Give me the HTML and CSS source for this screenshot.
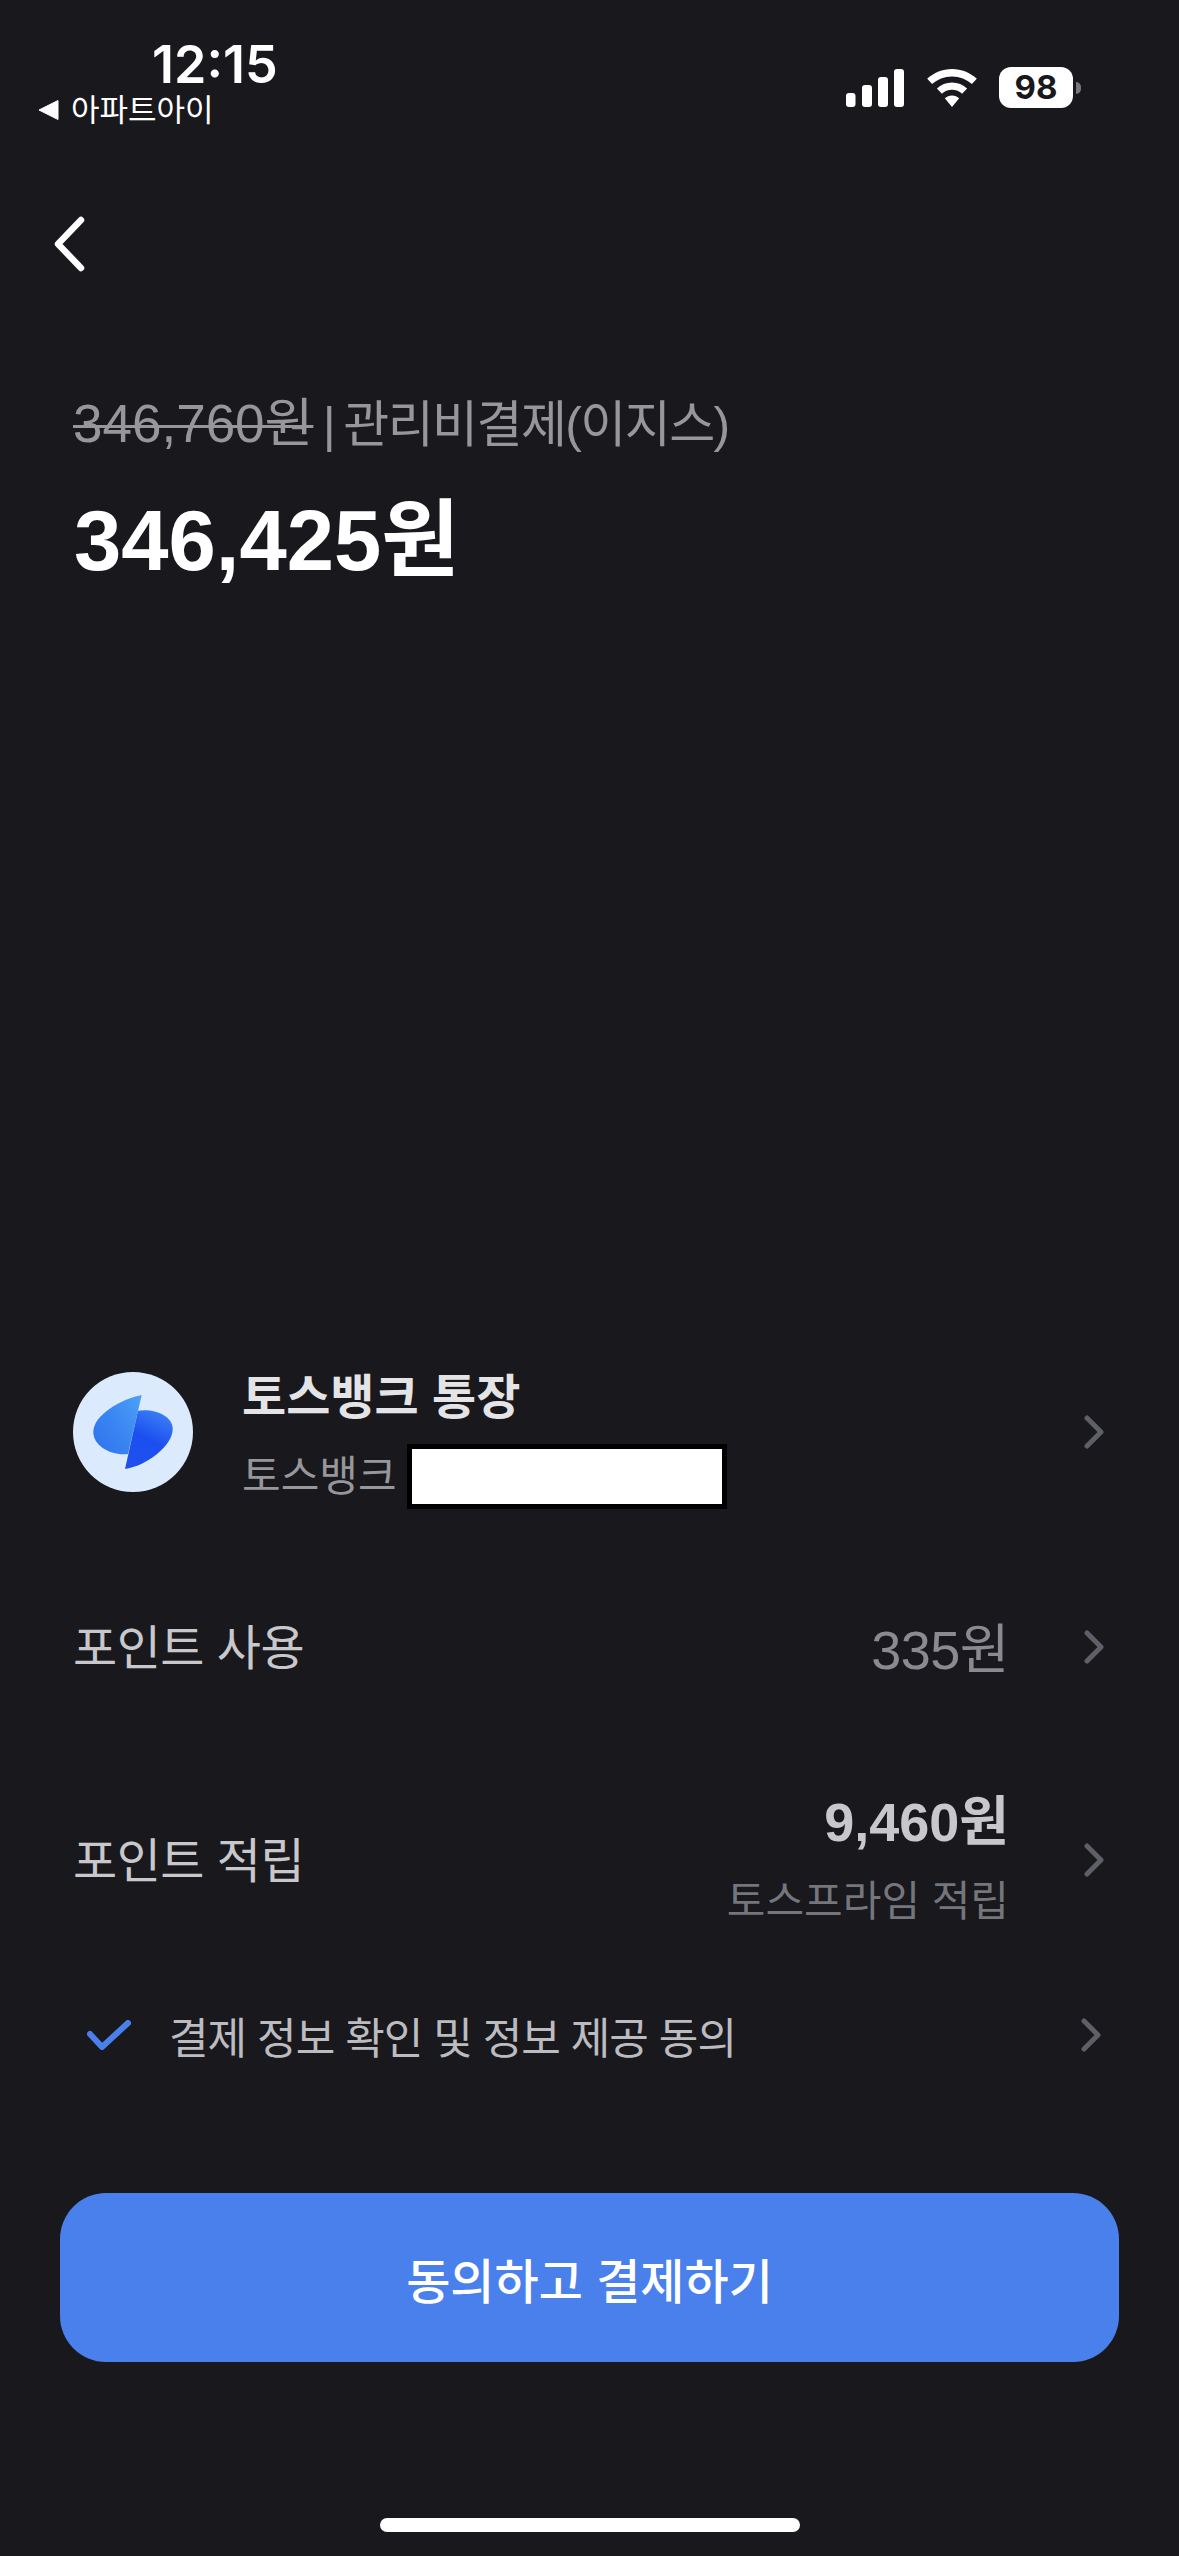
FILE: index.html
```html
<!DOCTYPE html>
<html lang="ko">
<head>
    <meta charset="UTF-8">
    <meta name="viewport" content="width=device-width, initial-scale=1.0">
    <title>결제</title>
    <link rel="stylesheet" href="styles.css">
</head>
<body>
    <div class="page">
        <!-- Status bar -->
        <div class="status">
            <div class="status-left">
                <div class="time">12:15</div>
                <div class="back-app">
                    <svg class="back-tri" viewBox="0 0 21 20"><path d="M20 .5V19.500L1 10Z" fill="#fff" stroke="#fff" stroke-linejoin="round"/></svg>
                    <span>아파트아이</span>
                </div>
            </div>
            <div class="status-right">
                <svg class="signal" viewBox="0 0 58 38" fill="#fff">
                    <rect x="0" y="24" width="9.500" height="14" rx="3"/>
                    <rect x="16" y="16" width="10" height="22" rx="3"/>
                    <rect x="32" y="8" width="10" height="30" rx="3"/>
                    <rect x="48" y="0" width="10" height="38" rx="3"/>
                </svg>
                <svg class="wifi" viewBox="0 0 50 38" fill="#fff">
                    <path d="M25 0C34.500 0 43.200 3.700 49.800 9.700L44.900 15.100C39.700 10.300 32.700 7.400 25 7.400S10.300 10.300 5.100 15.100L.2 9.700C6.800 3.700 15.500 0 25 0Z"/>
                    <path d="M25 13.500C30.800 13.500 36.100 15.700 40.100 19.400L35.100 24.800C32.500 22.300 28.900 20.800 25 20.800S17.500 22.300 14.900 24.800L9.900 19.400C13.900 15.700 19.200 13.500 25 13.500Z"/>
                    <path d="M25 26.500C27.800 26.500 30.300 27.600 32.200 29.300L25 38 17.800 29.300C19.700 27.600 22.200 26.500 25 26.500Z"/>
                </svg>
                <div class="battery">
                    <div class="battery-body">98</div>
                    <div class="battery-cap"></div>
                </div>
            </div>
        </div>

        <!-- Back -->
        <div class="nav">
            <svg class="back" viewBox="0 0 32 56"><path d="M28 4L5 28L28 52" fill="none" stroke="#fff" stroke-width="6.500" stroke-linecap="round" stroke-linejoin="round"/></svg>
        </div>

        <!-- Price -->
        <div class="head">
            <div class="order"><span class="old-price">346,760원</span> | 관리비결제(이지스)</div>
            <div class="total">346,425원</div>
        </div>

        <div class="spacer"></div>

        <!-- Rows -->
        <div class="row row-bank">
            <svg class="bank-logo" viewBox="0 0 120 120">
                <defs>
                    <linearGradient id="leftGrad" x1="1" y1="0.1" x2="0" y2="0.9">
                        <stop offset="0" stop-color="#4aa0f8"/>
                        <stop offset="0.5" stop-color="#3a86f2"/>
                        <stop offset="1" stop-color="#2f74ee"/>
                    </linearGradient>
                    <linearGradient id="rightGrad" x1="0.7" y1="0" x2="0.3" y2="1">
                        <stop offset="0" stop-color="#3a80f4"/>
                        <stop offset="0.5" stop-color="#1c4ef0"/>
                        <stop offset="1" stop-color="#1f50ee"/>
                    </linearGradient>
                </defs>
                <circle cx="60" cy="60" r="60" fill="#dceafd"/>
                <path d="M68.700 23C48 27 20.300 43 20.300 60C20.300 74 38 84 55 82Z" fill="url(#leftGrad)"/>
                <path d="M65 38.700C80 36 99.700 43 99.700 57C99.700 74 73 94 52 97Z" fill="url(#rightGrad)"/>
            </svg>
            <div class="bank-text">
                <div class="bank-name">토스뱅크 통장</div>
                <div class="bank-sub">
                    <span>토스뱅크</span>
                    <div class="masked"></div>
                </div>
            </div>
            <svg class="chev" viewBox="0 0 20 34"><path d="M3 3L17 17L3 31" /></svg>
        </div>

        <div class="row row-use">
            <div class="row-label">포인트 사용</div>
            <div class="row-value">335원</div>
            <svg class="chev" viewBox="0 0 20 34"><path d="M3 3L17 17L3 31" /></svg>
        </div>

        <div class="row row-earn">
            <div class="row-label">포인트 적립</div>
            <div class="earn-value">
                <div class="earn-amount">9,460원</div>
                <div class="earn-note">토스프라임 적립</div>
            </div>
            <svg class="chev" viewBox="0 0 20 34"><path d="M3 3L17 17L3 31" /></svg>
        </div>

        <div class="row row-agree">
            <svg class="check" viewBox="0 0 44 30"><path d="M3 14L15 27L41 3" /></svg>
            <div class="agree-text">결제 정보 확인 및 정보 제공 동의</div>
            <svg class="chev" viewBox="0 0 20 34"><path d="M3 3L17 17L3 31" /></svg>
        </div>

        <button class="pay" type="button">동의하고 결제하기</button>

        <div class="home-bar"></div>
    </div>
</body>
</html>
```

FILE: styles.css
```css
* {
    box-sizing: border-box;
}
body {
    margin: 0;
    background-color: #18181d;
    font-family: "Liberation Sans", "Noto Sans CJK KR", sans-serif;
}
.page {
    width: 1179px;
    height: 2556px;
    display: flex;
    flex-direction: column;
    overflow: hidden;
}

/* status bar */
.status {
    display: flex;
    justify-content: space-between;
    align-items: flex-start;
    height: 130px;
    padding: 40px 98px 0 38px;
    font-family: Inter, "Noto Sans CJK KR", sans-serif;
}
.time {
    margin-left: 114px;
    font-size: 52px;
    line-height: 50px;
    font-weight: 600;
    color: #ffffff;
}
.back-app {
    display: flex;
    align-items: center;
    gap: 12px;
    margin-top: 2px;
    height: 36px;
    font-size: 31px;
    line-height: 36px;
    color: #ffffff;
}
.back-tri {
    width: 21px;
    height: 20px;
}
.status-right {
    display: flex;
    align-items: center;
    margin-top: 27px;
}
.signal {
    width: 58px;
    height: 38px;
}
.wifi {
    width: 50px;
    height: 38px;
    margin-left: 23px;
}
.battery {
    display: flex;
    align-items: center;
    margin-left: 22px;
}
.battery-body {
    width: 74px;
    height: 41px;
    border-radius: 12px;
    background-color: #ffffff;
    color: #18181d;
    font-size: 33px;
    line-height: 41px;
    font-weight: 700;
    text-align: center;
}
.battery-cap {
    width: 5px;
    height: 12px;
    margin-left: 3px;
    border-radius: 0 6px 6px 0;
    background-color: #77777c;
}

/* back button */
.nav {
    height: 150px;
    padding: 86px 0 0 53px;
}
.back {
    display: block;
    width: 32px;
    height: 56px;
}

/* price */
.head {
    padding: 0 73px;
}
.order {
    margin-top: 109px;
    font-size: 50px;
    line-height: 70px;
    color: #96969b;
    letter-spacing: -1.6px;
    word-spacing: -3px;
}
.old-price {
    font-size: 53px;
    letter-spacing: 0;
    text-decoration: line-through;
    text-decoration-thickness: 3px;
}
.total {
    margin-top: 31px;
    margin-left: 1px;
    font-size: 85px;
    line-height: 100px;
    font-weight: 700;
    color: #ffffff;
}
.spacer {
    flex: 1;
}

/* rows */
.row {
    display: flex;
    align-items: center;
    padding: 0 75px 0 73px;
}
.row-bank {
    height: 196px;
}
.row-use {
    height: 234px;
}
.row-earn {
    height: 192px;
}
.row-agree {
    height: 158px;
    padding: 0 78px 0 87px;
}
.bank-logo {
    width: 120px;
    height: 120px;
    flex-shrink: 0;
}
.bank-text {
    flex: 1;
    margin-left: 49px;
    padding-top: 14px;
}
.bank-name {
    font-size: 48px;
    line-height: 56px;
    font-weight: 700;
    color: #e4e4e6;
}
.bank-sub {
    display: flex;
    align-items: center;
    gap: 10px;
    margin-top: 18px;
    font-size: 42px;
    line-height: 65px;
    color: #96969b;
}
.masked {
    width: 320px;
    height: 65px;
    background-color: #ffffff;
    border: 5px solid #000000;
}
.row-label {
    flex: 1;
    padding-bottom: 6px;
    font-size: 48px;
    letter-spacing: -0.5px;
    color: #c8c8cc;
}
.row-value {
    padding-bottom: 4px;
    font-size: 54px;
    color: #8a8a90;
    letter-spacing: -0.5px;
}
.earn-value {
    text-align: right;
}
.earn-amount {
    font-size: 54px;
    line-height: 62px;
    font-weight: 700;
    color: #c8c8ca;
}
.earn-note {
    margin-top: 21px;
    font-size: 42px;
    line-height: 56px;
    color: #75757c;
}
.chev {
    width: 20px;
    height: 34px;
    margin-left: 75px;
    flex-shrink: 0;
}
.chev path {
    fill: none;
    stroke: #5f5f68;
    stroke-width: 5;
    stroke-linecap: round;
    stroke-linejoin: round;
}
.check {
    width: 44px;
    height: 30px;
    flex-shrink: 0;
}
.check path {
    fill: none;
    stroke: #4a80ec;
    stroke-width: 6;
    stroke-linecap: round;
    stroke-linejoin: round;
}
.agree-text {
    flex: 1;
    margin-left: 38px;
    font-size: 43px;
    letter-spacing: -1px;
    color: #bcbcc0;
}

/* button */
.pay {
    display: block;
    width: 1059px;
    height: 169px;
    margin: 79px 0 0 60px;
    border: none;
    border-radius: 46px;
    background-color: #4a80ec;
    color: #ffffff;
    font-family: inherit;
    font-size: 48px;
    font-weight: 500;
}
.home-bar {
    width: 420px;
    height: 14px;
    margin: 156px 0 24px 380px;
    border-radius: 7px;
    background-color: #ffffff;
}
```
